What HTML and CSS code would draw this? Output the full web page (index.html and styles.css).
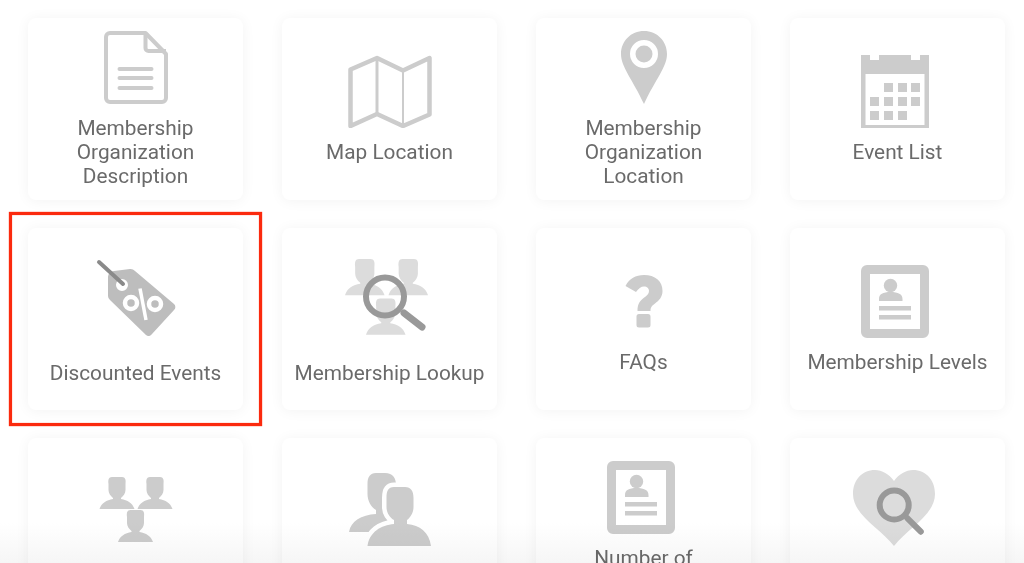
FILE: index.html
```html
<!DOCTYPE html>
<html lang="en">
<head>
<meta charset="utf-8">
<title>Membership widgets</title>
<link rel="stylesheet" href="styles.css">
</head>
<body>
<svg class="defs" width="0" height="0" aria-hidden="true">
  <defs>
    <g id="badge"><path class="fill" fill-rule="evenodd" d="M6 0H62a6 6 0 0 1 6 6V67a6 6 0 0 1-6 6H6a6 6 0 0 1-6-6V6a6 6 0 0 1 6-6ZM9 9V64H59V9Z"/><circle class="fill" cx="29.500" cy="20.500" r="6.700"/><path class="fill" d="M18 34c0-5 4-7 11.500-7s12 2 12 7v2H18ZM18 41H50V45.500H18ZM18 50H50V54.500H18Z"/></g>
    <path id="person" d="M12.500 0H22.500C26 0 26.500 3 26 7L26 13C26 16 24 19 21.500 21V22C28 23 33 26 35 32H0C2 26 7 23 13.500 22V21C11 19 9 16 9 13L9 7C8.500 3 9 0 12.500 0Z"/>
  </defs>
</svg>
<main class="grid">
  <div class="card">
    <svg class="icon" width="64" height="73" viewBox="0 0 64 73"><path class="line" d="M6 2H41.500L62 23V67a4 4 0 0 1-4 4H6a4 4 0 0 1-4-4V6a4 4 0 0 1 4-4Z"/><path class="line" d="M41.500 2V17a3 3 0 0 0 3 3H62"/><path class="bars" d="M15.500 38H47.500M15.500 47H47.500M15.500 57H47.500"/></svg>
    <div class="label">Membership Organization Description</div>
  </div>
  <div class="card">
    <svg class="icon" width="84" height="73" viewBox="0 0 84 73"><path class="line wide" d="M2.500 14.500 29 3 55 15.500 81.500 3V59.500L55 71 29 59 2.500 71Z"/><path class="thin" d="M29 3V59"/><path class="thinner" d="M55 15.500V71"/></svg>
    <div class="label">Map Location</div>
  </div>
  <div class="card">
    <svg class="icon" width="48" height="73" viewBox="0 0 48 73"><path class="fill" fill-rule="evenodd" d="M24 0C37 0 47 10 47 23 47 36 35 49 24 73 13 49 1 36 1 23 1 10 11 0 24 0ZM24 9a14 14 0 1 0 0 28 14 14 0 0 0 0-28Z"/><circle class="fill" cx="24" cy="23" r="8.500"/></svg>
    <div class="label">Membership Organization Location</div>
  </div>
  <div class="card">
    <svg class="icon" width="74" height="73" viewBox="0 0 74 73"><path class="fill" fill-rule="evenodd" d="M0 0H9V5H18V0H50V5H59V0H68V73H0ZM4.500 19V70H63.500V19Z"/><path class="fill" d="M23 28h9v9h-9zM37 28h9v9h-9zM50 28h9v9h-9zM9 42h9v9h-9zM23 42h9v9h-9zM37 42h9v9h-9zM50 42h9v9h-9zM9 56h9v9h-9zM23 56h9v9h-9zM37 56h9v9h-9z"/></svg>
    <div class="label">Event List</div>
  </div>

  <div class="card">
    <svg class="icon" width="84" height="96" viewBox="0 0 84 96"><path class="tag" fill-rule="evenodd" d="M14 24a6 6 0 0 1 6-6L36 16a6 6 0 0 1 5 2L80 51a4 4 0 0 1 0 6L58 81a4 4 0 0 1-6 1L16 47a5 5 0 0 1-2-4ZM28 26a6 6 0 1 0 0 12 6 6 0 0 0 0-12Z"/><circle class="cut" cx="37" cy="50" r="6"/><circle class="cut" cx="61" cy="51" r="6"/><path class="slash" d="M46 35.500 52 67"/><path class="string" d="M5 9 29 31"/></svg>
    <div class="label">Discounted Events</div>
  </div>
  <div class="card">
    <svg class="icon" width="90" height="96" viewBox="0 0 90 96"><g class="pale"><use href="#person" transform="translate(0 6) scale(1.130)"/><use href="#person" transform="translate(43.500 6) scale(1.130)"/><use href="#person" transform="translate(21 45.500) scale(1.130)"/></g><circle class="lens" cx="40" cy="43.500" r="19"/><path class="handle" d="M59 60 77 74"/></svg>
    <div class="label">Membership Lookup</div>
  </div>
  <div class="card">
    <svg class="icon" width="40" height="73" viewBox="0 0 40 73"><path class="fill" d="M20 10C31 10 38.500 16 38.500 26 38.500 32 35 35.500 31 38.500 27.500 41 26.500 42.500 26.500 46H13.500C13.500 40 15 36.500 19 33.500 23 30.500 25 29 25 26 25 23.500 23 21.500 20 21.500 17 21.500 14.500 23.500 12 27L1.500 21C5.500 13.500 11.500 10 20 10ZM15 49H24a2.500 2.500 0 0 1 2.500 2.500V60a2.500 2.500 0 0 1-2.500 2.500H15a2.500 2.500 0 0 1-2.500-2.500V51.500A2.500 2.500 0 0 1 15 49Z"/></svg>
    <div class="label">FAQs</div>
  </div>
  <div class="card">
    <svg class="icon" width="74" height="73" viewBox="0 0 74 73"><use href="#badge"/></svg>
    <div class="label">Membership Levels</div>
  </div>

  <div class="card">
    <svg class="icon" width="74" height="68" viewBox="0 0 74 68"><g class="gray"><use href="#person" x="0.500" y="0"/><use href="#person" x="38.500" y="0"/><use href="#person" x="19" y="33"/></g></svg>
    <div class="label">&nbsp;</div>
  </div>
  <div class="card">
    <svg class="icon" width="82" height="76" viewBox="0 0 82 76"><path class="fill" d="M27 0H36C44 0 47 5 47 12V59H0C2 48 12 42 27 41V37C22 34 18.500 28 18.500 21V11C18.500 4 21 0 27 0Z"/><path class="front" d="M45 14H56C62 14 64.500 18 64.500 25V34C64.500 40 61 45 58 47V51C71 52 80 59 82 73H18.500C20.500 59 32 52 45 51V47C41 45 37.500 40 37.500 34V25C37.500 18 39 14 45 14Z"/></svg>
    <div class="label">&nbsp;</div>
  </div>
  <div class="card">
    <svg class="icon" width="74" height="73" viewBox="0 0 74 73"><use href="#badge"/></svg>
    <div class="label label-lift">Number of<br>Members</div>
  </div>
  <div class="card">
    <svg class="icon" width="90" height="82" viewBox="0 0 90 82"><path class="pale" d="M41 11C46 4 53 0 60 0 73 0 82 10 82 24 82 45 55 58 41 76 27 58 0 45 0 24 0 10 9 0 22 0 29 0 36 4 41 11Z"/><circle class="lens small" cx="41.200" cy="35" r="14.500"/><path class="handle small" d="M54.500 48.300 67.800 61.700"/></svg>
    <div class="label">&nbsp;</div>
  </div>
</main>
<div class="highlight"></div>
<div class="fade"></div>
</body>
</html>
```
FILE: styles.css
```css
html, body { margin: 0; height: 100%; overflow: hidden; background: #fff; }
body { position: relative; font-family: Roboto, "Liberation Sans", sans-serif; }
.grid { display: grid; grid-template-columns: repeat(4, 215px); grid-auto-rows: 182px; column-gap: 39px; row-gap: 28px; padding: 18px 0 0 28px; }
.card { display: flex; flex-direction: column; align-items: center; justify-content: center; gap: 12px; background: #fff; border-radius: 8px; box-shadow: 0 1px 14px rgba(0,0,0,.05); }
.icon { display: block; flex: none; }
.label { width: 190px; font-size: 20.800px; line-height: 24px; text-align: center; color: #6a6a6a; }
.label-lift { margin-bottom: 3px; }
.fill { fill: #ccc; }
.gray { fill: #ccc; }
.front { fill: #ccc; stroke: #fff; stroke-width: 9px; paint-order: stroke; }
.line { fill: none; stroke: #ccc; stroke-width: 4; stroke-linejoin: round; }
.line.wide { stroke-width: 4.500; }
.thin { fill: none; stroke: #ccc; stroke-width: 3; }
.thinner { fill: none; stroke: #ccc; stroke-width: 2; }
.bars { fill: none; stroke: #ccc; stroke-width: 4; stroke-linecap: round; }
.tag { fill: #bdbdbd; }
.cut { fill: none; stroke: #fff; stroke-width: 4.500; }
.slash { stroke: #fff; stroke-width: 3.500; }
.string { stroke: #8a8a8a; stroke-width: 4; stroke-linecap: round; }
.pale { fill: #dcdcdc; }
.lens { fill: none; stroke: #999; stroke-width: 6; }
.handle { stroke: #999; stroke-width: 7; stroke-linecap: round; }
.handle.small { stroke-width: 6; }
.highlight { position: absolute; left: 9px; top: 212px; width: 247px; height: 208px; border: 3px solid #fb2a0e; box-shadow: inset 0 0 1px #fb2a0e, 0 0 1px #fb2a0e; pointer-events: none; }
.fade { position: absolute; left: 0; right: 0; bottom: 0; height: 40px; background: linear-gradient(#fff, #f6f6f6); mix-blend-mode: multiply; pointer-events: none; }
.defs { position: absolute; }
```
